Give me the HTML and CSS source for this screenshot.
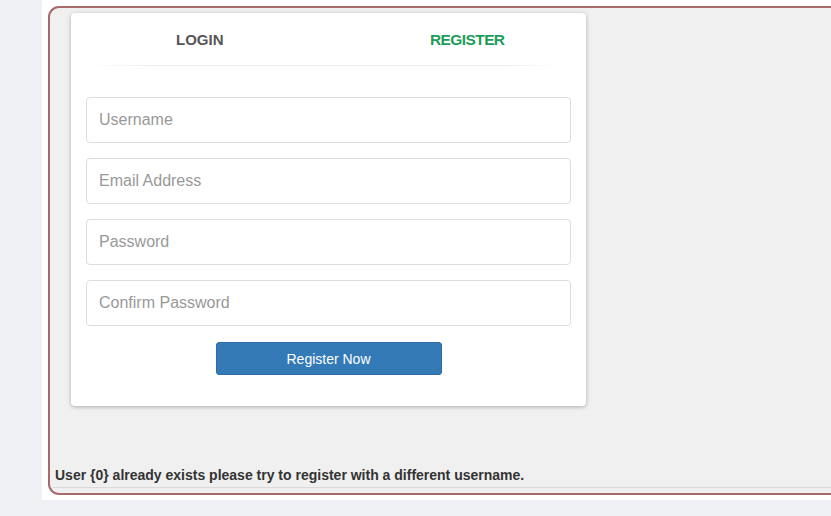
FILE: index.html
```html
<!DOCTYPE html>
<html>
<head>
<meta charset="utf-8">
<link rel="stylesheet" href="styles.css">
</head>
<body>
<div class="page">
  <div class="frame">
    <div class="card">
      <div class="tabs">
        <div class="tab">LOGIN</div>
        <div class="tab tab-active">REGISTER</div>
      </div>
      <div class="sep"></div>
      <form class="form">
        <input class="field" type="text" placeholder="Username">
        <input class="field" type="text" placeholder="Email Address">
        <input class="field" type="password" placeholder="Password">
        <input class="field" type="password" placeholder="Confirm Password">
        <button class="btn" type="button">Register Now</button>
      </form>
    </div>
    <div class="message">User {0} already exists please try to register with a different username.</div>
  </div>
</div>
</body>
</html>
```
FILE: styles.css
```css
html, body {
  margin: 0;
  padding: 0;
}
body {
  background: #eff0f4;
  font-family: "Liberation Sans", Arial, sans-serif;
  overflow: hidden;
  width: 831px;
  height: 516px;
}
.page {
  box-sizing: border-box;
  margin-left: 42px;
  background: #ffffff;
  padding: 6px 0 5px 6px;
  height: 500px;
}
.frame {
  box-sizing: border-box;
  height: 489px;
  border: 2px solid #a66a6a;
  border-right: none;
  border-radius: 11px 0 0 11px;
  background: #f0f0f0;
  display: flex;
  flex-direction: column;
  padding: 5px 0 0 21px;
}
.card {
  width: 515px;
  background: #ffffff;
  border-radius: 4px;
  box-shadow: 0 1px 4px rgba(0, 0, 0, 0.28);
  padding-bottom: 31px;
}
.tabs {
  display: grid;
  grid-template-columns: 1fr 1fr;
  height: 52px;
  align-items: center;
}
.tab {
  text-align: center;
  font-weight: bold;
  font-size: 15px;
  line-height: 18px;
  padding-top: 2px;
  color: #555555;
}
.tab-active {
  color: #1d9d5a;
  font-size: 15.5px;
  letter-spacing: -0.6px;
  padding-left: 20px;
}
.sep {
  height: 1px;
  margin: 0 22px 0 18px;
  background: linear-gradient(to right, rgba(230,230,230,0), #ebebeb 15%, #ebebeb 85%, rgba(230,230,230,0));
}
.form {
  display: flex;
  flex-direction: column;
  align-items: center;
  padding: 31px 15px 0;
  gap: 15px;
}
.field {
  box-sizing: border-box;
  width: 485px;
  height: 46px;
  border: 1px solid #dddddd;
  border-radius: 4px;
  padding: 0 12px;
  font-family: "Liberation Sans", Arial, sans-serif;
  font-size: 16px;
  color: #555;
  background: #fff;
  outline: none;
}
.field::placeholder {
  color: #999999;
}
.btn {
  margin-top: 1px;
  width: 226px;
  height: 33px;
  border: 1px solid #2e6da4;
  border-radius: 3px;
  background: #337ab7;
  color: #ffffff;
  font-family: "Liberation Sans", Arial, sans-serif;
  font-size: 14px;
}
.message {
  margin-top: auto;
  margin-left: -18px;
  margin-bottom: 5px;
  padding: 0 0 4px 2px;
  border-bottom: 1px solid #dadada;
  font-weight: bold;
  font-size: 14px;
  color: #333333;
  line-height: 16px;
}
```
